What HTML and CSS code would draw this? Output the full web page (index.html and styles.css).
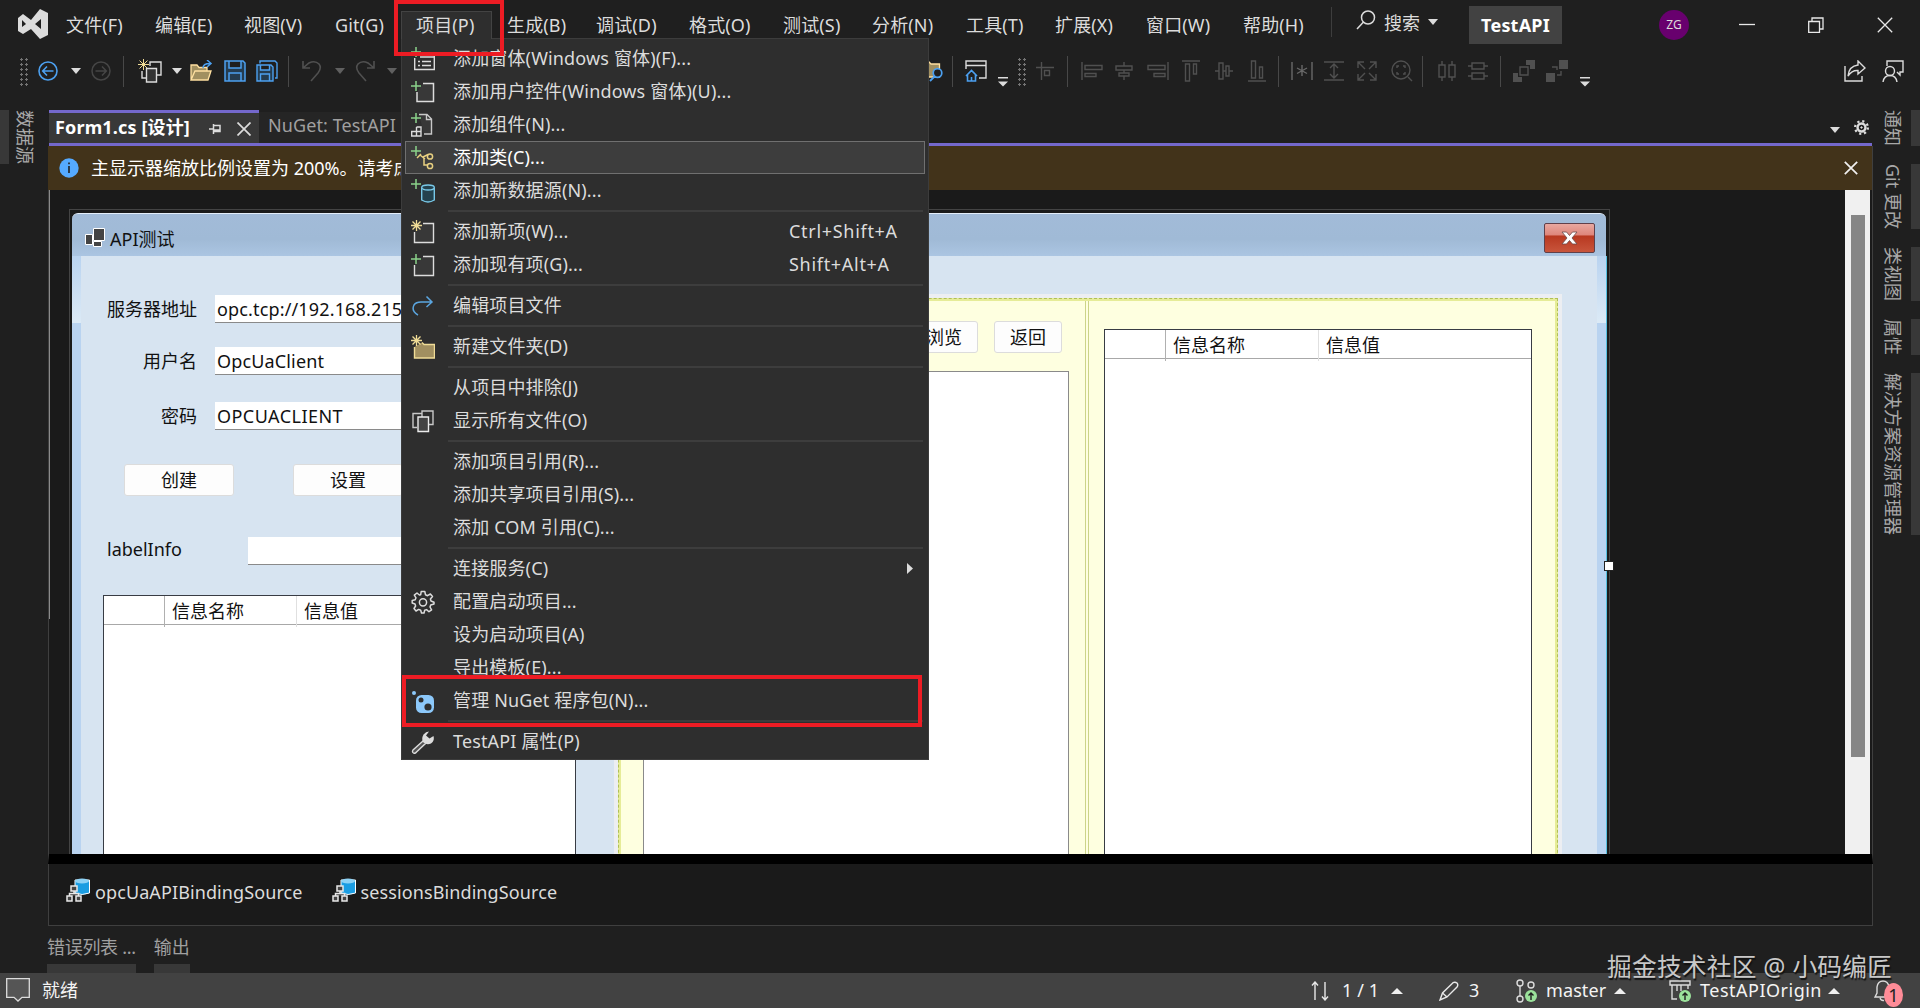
FILE: index.html
```html
<!DOCTYPE html>
<html lang="zh-CN">
<head>
    <meta charset="UTF-8">
    <title>TestAPI</title>
    <link rel="stylesheet" href="styles.css">
</head>
<body>

<!-- Title bar -->
<header class="titlebar">
    <svg class="logo" width="30" height="30" viewBox="0 0 30 30"><path fill="#dcdcdc" fill-rule="evenodd" d="M0 9L5 5L13 11L22 0L30 4V26L22 30L13 20L5 25L0 22ZM4 11V18L8 15ZM17 15L23 20V10Z"/></svg>
    <nav class="menubar">
        <span>文件(F)</span>
        <span>编辑(E)</span>
        <span>视图(V)</span>
        <span>Git(G)</span>
        <span class="open">项目(P)</span>
        <span>生成(B)</span>
        <span>调试(D)</span>
        <span>格式(O)</span>
        <span>测试(S)</span>
        <span>分析(N)</span>
        <span>工具(T)</span>
        <span>扩展(X)</span>
        <span>窗口(W)</span>
        <span>帮助(H)</span>
    </nav>
    <div class="search">
        <svg width="20" height="20" viewBox="0 0 20 20" fill="none" stroke="#dcdcdc" stroke-width="1.5"><circle cx="12" cy="7.500" r="6.500"/><path d="M7.500 12L1 19"/></svg>
        <span>搜索</span>
        <i class="caret"></i>
    </div>
    <div class="solution">TestAPI</div>
    <div class="avatar">ZG</div>
    <div class="window-buttons">
        <svg width="16" height="16" viewBox="0 0 16 16" stroke="#e8e8e8" stroke-width="1.300"><path d="M0 7.500H16"/></svg>
        <svg width="16" height="16" viewBox="0 0 16 16" fill="none" stroke="#e8e8e8" stroke-width="1.300"><path d="M.7 4.500H11.500V15.300H.7ZM4 4V1H15V12H12"/></svg>
        <svg width="16" height="16" viewBox="0 0 16 16" stroke="#e8e8e8" stroke-width="1.300"><path d="M.8.800L15.200 15.200M15.200.8L.8 15.200"/></svg>
    </div>
</header>

<!-- Toolbars -->
<div class="toolbar">
    <div class="standard-tools">
        <i class="grip"></i>
        <svg width="20" height="20" viewBox="0 0 20 20" fill="none" stroke="#4ca0f0" stroke-width="1.600"><circle cx="10" cy="10" r="9"/><path d="M15.500 10H5M9 5.500L4.700 10L9 14.500"/></svg>
        <i class="caret"></i>
        <svg width="20" height="20" viewBox="0 0 20 20" fill="none" stroke="#464646" stroke-width="1.500"><circle cx="10" cy="10" r="9"/><path d="M4.500 10H15M11 5.500L15.300 10L11 14.500"/></svg>
        <i class="bar"></i>
        <svg width="24" height="24" viewBox="0 0 24 24" fill="none"><path stroke="#f0dc96" d="M5.500 0V11M0 5.500H11M1.500 1.500L9.500 9.500M9.500 1.500L1.500 9.500"/><path stroke="#dcdcdc" stroke-width="1.400" d="M4 12V19H8M12 7V3H23V16H18"/><path stroke="#dcdcdc" fill="#333" stroke-width="1.400" d="M8.500 9.500H18.500V23H8.500Z"/></svg>
        <i class="caret"></i>
        <svg width="23" height="22" viewBox="0 0 23 22" fill="none"><path fill="#a18f60" stroke="#ffe0a0" stroke-width="1.300" d="M1 20V5H7L9 7.500H17V11M1 20L5 11H21L18 20Z"/><path stroke="#4ca0f0" stroke-width="1.500" d="M13 8Q13 3.500 20 3.500M17 0L21 3.500L17 7"/></svg>
        <svg width="22" height="22" viewBox="0 0 22 22" fill="#243c50" stroke="#4ca0f0" stroke-width="1.500"><path d="M1 1H19L21 3V21H1ZM5 1V8H17V1M5 21V13H17V21"/></svg>
        <svg width="22" height="22" viewBox="0 0 22 22" fill="#243c50" stroke="#4ca0f0" stroke-width="1.400"><path fill="none" d="M4 3.500V1H19L21 3V18H19"/><path d="M1 5H15L17 7V21H1ZM4.500 5V10H13.500V5M4.500 21V14H13.500V21"/></svg>
        <i class="bar"></i>
        <svg width="20" height="22" viewBox="0 0 20 22" fill="none" stroke="#505050" stroke-width="1.600"><path d="M1 1V8H8M1 8L7 3Q13 0 17 4Q20 8 16 13L9 21"/></svg>
        <i class="caret dim"></i>
        <svg width="20" height="22" viewBox="0 0 20 22" fill="none" stroke="#505050" stroke-width="1.600"><path d="M19 1V8H12M19 8L13 3Q7 0 3 4Q0 8 4 13L11 21"/></svg>
        <i class="caret dim"></i>
    </div>
    <div class="design-tools">
        <svg width="18" height="24" viewBox="0 0 18 24" fill="none"><path fill="#a18f60" stroke="#ffe0a0" stroke-width="1.300" d="M-4 3H2L4 5H12.500V18H-4Z"/><circle cx="10.500" cy="14" r="4.300" fill="#1f1f1f" stroke="#4ca0f0" stroke-width="1.700"/><path stroke="#4ca0f0" stroke-width="1.800" d="M7.500 17.500L3 22"/></svg>
        <i class="bar"></i>
        <svg width="22" height="22" viewBox="0 0 22 22" fill="none"><path stroke="#dcdcdc" stroke-width="1.400" d="M1 9V1H21V18H14M1 5.500H21"/><path stroke="#4ca0f0" stroke-width="1.600" d="M1 16L6.500 10.500L12 16M2.500 15V21H10.500V15M6.500 21V17"/></svg>
        <svg class="overflow" width="10" height="10" viewBox="0 0 10 10"><path fill="#dcdcdc" d="M0 0H10V1.500H0ZM0 4.500H10L5 9.500Z"/></svg>
        <i class="grip"></i>
        <svg class="dim-icon" width="18" height="18" viewBox="0 0 18 18"><path d="M5.500 0V18M0 5.500H18M8.500 8.500H13.500V13.500H8.500Z"/></svg>
        <i class="bar"></i>
        <svg class="dim-icon" width="22" height="18" viewBox="0 0 22 18"><path d="M1 0V18M4 3.500H21V7.500H4ZM4 11.500H15V14.500H4Z"/></svg>
        <svg class="dim-icon" width="18" height="18" viewBox="0 0 18 18"><path d="M9 0V4M9 8V11M9 14V18M1 4H17V8H1ZM4 11H14V14H4Z"/></svg>
        <svg class="dim-icon" width="22" height="18" viewBox="0 0 22 18"><path d="M21 0V18M1 3.500H18V7.500H1ZM7 11.500H18V14.500H7Z"/></svg>
        <svg class="dim-icon" width="18" height="22" viewBox="0 0 18 22"><path d="M0 1H18M3.500 4H7.500V21H3.500ZM11.500 4H14.500V14H11.500Z"/></svg>
        <svg class="dim-icon" width="18" height="18" viewBox="0 0 18 18"><path d="M0 9H4M8 9H11M14 9H18M4 1H8V17H4ZM11 4H14V14H11Z"/></svg>
        <svg class="dim-icon" width="18" height="22" viewBox="0 0 18 22"><path d="M0 21H18M3.500 1H7.500V18H3.500ZM11.500 7H14.500V18H11.500Z"/></svg>
        <i class="bar"></i>
        <svg class="dim-icon bright" width="22" height="20" viewBox="0 0 22 20"><path d="M1 1V19M21 1V19M11 4V15M6 7L16 12.500M16 7L6 12.500"/></svg>
        <svg class="dim-icon" width="20" height="20" viewBox="0 0 20 20"><path d="M0 1H20M0 19H20M10 3V17M6 7L10 3L14 7M6 13L10 17L14 13"/></svg>
        <svg class="dim-icon" width="20" height="20" viewBox="0 0 20 20"><path d="M1 7V1H7M1 1L8 8M13 1H19V7M19 1L12 8M1 13V19H7M1 19L8 12M19 13V19H13M19 19L12 12"/></svg>
        <svg class="dim-icon" width="22" height="22" viewBox="0 0 22 22"><circle cx="10" cy="10" r="9"/><path d="M17 17L21 21M6 8V6H8M12 6H14V8M6 12V14H8M14 12V14H12"/></svg>
        <i class="bar"></i>
        <svg class="dim-icon" width="18" height="20" viewBox="0 0 18 20"><path d="M1 4H7V16H1ZM11 4H17V16H11ZM4 0V4M4 16V20M14 0V4M14 16V20"/></svg>
        <svg class="dim-icon" width="20" height="20" viewBox="0 0 20 20"><path d="M4 2H16V8H4ZM4 12H16V18H4ZM0 5H4M16 5H20M0 15H4M16 15H20"/></svg>
        <i class="bar"></i>
        <svg class="dim-icon" width="22" height="22" viewBox="0 0 22 22"><path d="M7 7H15V15H7Z"/><path class="solid" d="M13 0H22V9H17V5H13ZM0 13H5V17H9V22H0Z"/></svg>
        <svg class="dim-icon" width="22" height="22" viewBox="0 0 22 22"><path d="M6 7H11V10M11 15H15V11"/><path class="solid" d="M13 0H22V9H13ZM0 13H9V22H0Z"/></svg>
        <svg class="overflow" width="10" height="10" viewBox="0 0 10 10"><path fill="#dcdcdc" d="M0 0H10V1.500H0ZM0 4.500H10L5 9.500Z"/></svg>
    </div>
    <div class="feedback-tools">
        <svg width="22" height="22" viewBox="0 0 22 22" fill="none" stroke="#dcdcdc" stroke-width="1.400"><path d="M1 6V21H18V16M14 1L21 8L14 14V10.500Q8 10 4 16Q5 6 14 5Z"/></svg>
        <svg width="22" height="22" viewBox="0 0 22 22" fill="none" stroke="#dcdcdc" stroke-width="1.400"><path d="M5 6V1H21V12H18V15L15 12"/><circle cx="8" cy="11" r="4.500"/><path d="M1 22Q2 15.500 8 15.500Q14 15.500 15 22"/></svg>
    </div>
</div>

<main class="workspace">
    <aside class="rail rail-left">
        <span>数据源</span>
    </aside>

    <section class="document">
        <div class="tabs">
            <div class="tab active">
                <b>Form1.cs [设计]</b>
                <svg width="12" height="12" viewBox="0 0 12 12" fill="none" stroke="#dcdcdc" stroke-width="1.500"><path d="M0 6H4M4.500 1V11M5 2.500H11V8.500H5M5 7H11"/></svg>
                <svg width="14" height="14" viewBox="0 0 14 14" stroke="#dcdcdc" stroke-width="1.700"><path d="M.5.500L13.500 13.500M13.500.5L.5 13.500"/></svg>
            </div>
            <div class="tab">NuGet: TestAPI</div>
            <div class="tab-tools">
                <i class="caret"></i>
                <svg width="15" height="15" viewBox="0 0 16 16" fill="none" stroke="#dcdcdc"><circle cx="8" cy="8" r="4.200" stroke-width="2.600"/><circle cx="8" cy="8" r="6.800" stroke-width="2.400" stroke-dasharray="2.300 3.040"/><circle cx="8" cy="8" r=".8" fill="#dcdcdc"/></svg>
            </div>
        </div>
        <div class="infobar">
            <svg width="20" height="20" viewBox="0 0 20 20"><circle cx="10" cy="10" r="9.700" fill="#55aaff"/><path fill="#1f1f1f" d="M9.200 4.500H10.800V6.300H9.200ZM9.200 8H10.800V15H9.200Z"/></svg>
            <span>主显示器缩放比例设置为 200%。请考虑</span>
            <svg width="14" height="14" viewBox="0 0 14 14" stroke="#f0f0f0" stroke-width="1.700"><path d="M.8.800L13.200 13.200M13.200.8L.8 13.200"/></svg>
        </div>

        <!-- Designer surface -->
        <div class="designer">
            <div class="form-window">
                <div class="form-title">
                    <svg width="20" height="20" viewBox="0 0 20 20"><path fill="#444" stroke="#fff" d="M8.500.5H19.500V12.500H8.500ZM.5 6.500H7.500V16.500H.5ZM8.500 13.500H16.500V18.500H8.500Z"/></svg>
                    <span>API测试</span>
                    <div class="form-close">
                        <svg width="17" height="14" viewBox="0 0 17 14"><path fill="#fff" stroke="#6a4a4a" stroke-width=".8" d="M1 1H5.500L8.500 4.500L11.500 1H16L11 7L16 13H11.500L8.500 9.500L5.500 13H1L6 7Z"/></svg>
                    </div>
                </div>
                <div class="form-client">
                    <div class="settings">
                        <div class="field"><label>服务器地址</label><div class="textbox">opc.tcp://192.168.215</div></div>
                        <div class="field"><label>用户名</label><div class="textbox">OpcUaClient</div></div>
                        <div class="field password"><label>密码</label><div class="textbox">OPCUACLIENT</div></div>
                        <div class="actions">
                            <div class="button">创建</div>
                            <div class="button">设置</div>
                        </div>
                        <div class="field info"><span>labelInfo</span><div class="textbox"></div></div>
                        <div class="datagrid">
                            <div class="datagrid-head"><span></span><span>信息名称</span><span>信息值</span></div>
                        </div>
                    </div>
                    <div class="split-panel">
                        <div class="browse-pane">
                            <div class="browse-buttons">
                                <div class="button">浏览</div>
                                <div class="button">返回</div>
                            </div>
                            <div class="tree"></div>
                        </div>
                        <div class="value-pane">
                            <div class="datagrid">
                                <div class="datagrid-head"><span></span><span>信息名称</span><span>信息值</span></div>
                            </div>
                        </div>
                    </div>
                </div>
                <i class="handle"></i>
            </div>
            <div class="scrollbar"><i></i></div>
        </div>
        <div class="tray">
            <div class="component">
                <svg width="24" height="24" viewBox="0 0 24 24"><path fill="#1b9de2" stroke="#fff" d="M9 2V15Q16 18 23.500 15V2Z"/><ellipse cx="16" cy="3" rx="7" ry="2.500" fill="#8ed2f5"/><path fill="#444" stroke="#e8e8e8" stroke-width="1.500" d="M5 8H11V13H5ZM1 18H6V23H1ZM10 18H15V23H10ZM3.500 18V15.500H12.500V18M8 13V16"/></svg>
                <span>opcUaAPIBindingSource</span>
            </div>
            <div class="component">
                <svg width="24" height="24" viewBox="0 0 24 24"><path fill="#1b9de2" stroke="#fff" d="M9 2V15Q16 18 23.500 15V2Z"/><ellipse cx="16" cy="3" rx="7" ry="2.500" fill="#8ed2f5"/><path fill="#444" stroke="#e8e8e8" stroke-width="1.500" d="M5 8H11V13H5ZM1 18H6V23H1ZM10 18H15V23H10ZM3.500 18V15.500H12.500V18M8 13V16"/></svg>
                <span>sessionsBindingSource</span>
            </div>
        </div>
        <div class="output-tabs">
            <span>错误列表 ...</span>
            <span>输出</span>
        </div>
    </section>

    <aside class="rail rail-right">
        <span>通知</span>
        <span>Git 更改</span>
        <span>类视图</span>
        <span>属性</span>
        <span>解决方案资源管理器</span>
    </aside>
</main>

<!-- Status bar -->
<footer class="statusbar">
    <svg width="24" height="24" viewBox="0 0 24 24" fill="#555" stroke="#dcdcdc" stroke-width="1.300"><path d="M.7.700H23.300V19.300H16L12 23L8 19.300H.7Z"/></svg>
    <span class="ready">就绪</span>
    <div class="git-status">
        <svg width="18" height="20" viewBox="0 0 18 20" fill="none" stroke="#e8e8e8" stroke-width="1.400"><path d="M4 19V1M1 4.500L4 1L7 4.500M14 1V19M11 15.500L14 19L17 15.500"/></svg>
        <span>1 / 1</span>
        <i class="caret up"></i>
        <svg width="20" height="20" viewBox="0 0 20 20" fill="none" stroke="#e8e8e8" stroke-width="1.400"><path d="M1 19L3.500 12L14 1.700Q16 .5 18 2Q19.500 4 18 6L8 16ZM3.500 12L8 16"/></svg>
        <span>3</span>
        <svg width="22" height="24" viewBox="0 0 22 24" fill="none" stroke="#dcdcdc" stroke-width="1.400"><circle cx="4" cy="4" r="3"/><circle cx="4" cy="20" r="3"/><circle cx="15" cy="6" r="3"/><path d="M4 7V17"/><circle cx="15" cy="17" r="6" fill="#9be29b" stroke="none"/><path stroke="#1f1f1f" d="M15 21V14M12.500 16.500L15 14L17.500 16.500"/></svg>
        <span>master</span>
        <i class="caret up"></i>
        <svg width="22" height="24" viewBox="0 0 22 24" fill="none" stroke="#dcdcdc" stroke-width="1.400"><path d="M1 2H21V6H1ZM3 6V20H8M8 6V12M12 6V12M19 6V10"/><circle cx="16" cy="17" r="6" fill="#9be29b" stroke="none"/><path stroke="#1f1f1f" d="M16 21V14M13.500 16.500L16 14L18.500 16.500"/></svg>
        <span class="repo">TestAPIOrigin</span>
        <i class="caret up"></i>
        <div class="bell">
            <svg width="18" height="22" viewBox="0 0 18 22" fill="none" stroke="#dcdcdc" stroke-width="1.400"><path d="M1 17L3 13V7Q4 1 9 1Q14 1 15 7V13L17 17ZM6 18Q7 21 10 20.500"/></svg>
            <b>1</b>
        </div>
    </div>
</footer>

<!-- Project menu -->
<div class="popup">
    <div class="item">
        <svg width="24" height="24" viewBox="0 0 24 24" fill="none"><path stroke="#dcdcdc" stroke-width="1.400" d="M9 6H23.300V22.500H3.700V11M7 14.500H9M11 14.500H20M7 18.500H9M11 18.500H20M9 10H23"/><path class="plus" d="M5 0V10M0 5H10"/></svg>
        <span>添加窗体(Windows 窗体)(F)...</span>
    </div>
    <div class="item">
        <svg width="24" height="24" viewBox="0 0 24 24" fill="none"><path fill="#383838" stroke="#dcdcdc" stroke-width="1.500" d="M12 3.500H22.500V21.500H6V12"/><path class="plus" d="M5 1V11M0 6H10"/></svg>
        <span>添加用户控件(Windows 窗体)(U)...</span>
    </div>
    <div class="item">
        <svg width="24" height="24" viewBox="0 0 24 24" fill="none"><path fill="#383838" stroke="#c8c8c8" stroke-width="1.400" d="M8 1.500H16L20.500 6V21H13M15.500 2V6.500H20"/><path stroke="#dcdcdc" stroke-width="1.400" d="M5.500 14H10V23H.7V18.500H10M5.500 14V23"/><path class="plus" d="M5 0V10M0 5H10"/></svg>
        <span>添加组件(N)...</span>
    </div>
    <div class="item selected">
        <svg width="24" height="24" viewBox="0 0 24 24" fill="none"><g stroke="#e8d080" stroke-width="1.500"><path d="M6 12L10 8M9 9L14 13M12 11L17 8.500M13 12V19H17"/><circle cx="19" cy="10.500" r="2.600"/><circle cx="19" cy="20" r="2.600"/></g><path class="plus" d="M5 0V10M0 5H10"/></svg>
        <span>添加类(C)...</span>
    </div>
    <div class="item">
        <svg width="24" height="24" viewBox="0 0 24 24" fill="none"><path fill="#24424e" stroke="#78c8e8" stroke-width="1.400" d="M10.700 8.500V21Q17 25 23.300 21V8.500"/><ellipse cx="17" cy="8.500" rx="6.300" ry="2.500" fill="#24424e" stroke="#78c8e8" stroke-width="1.400"/><path class="plus" d="M5 0V10M0 5H10"/></svg>
        <span>添加新数据源(N)...</span>
    </div>
    <hr>
    <div class="item">
        <svg width="24" height="24" viewBox="0 0 24 24" fill="none"><path fill="#383838" stroke="#dcdcdc" stroke-width="1.400" d="M12 3.500H22.500V22.500H3.500V12"/><path class="spark" d="M5.500 0V11M0 5.500H11M1.500 1.500L9.500 9.500M9.500 1.500L1.500 9.500"/></svg>
        <span>添加新项(W)...</span>
        <kbd>Ctrl+Shift+A</kbd>
    </div>
    <div class="item">
        <svg width="24" height="24" viewBox="0 0 24 24" fill="none"><path fill="#383838" stroke="#dcdcdc" stroke-width="1.400" d="M12 3.500H22.500V22.500H3.500V12"/><path class="plus" d="M5 1V11M0 6H10"/></svg>
        <span>添加现有项(G)...</span>
        <kbd>Shift+Alt+A</kbd>
    </div>
    <hr>
    <div class="item">
        <svg width="24" height="24" viewBox="0 0 24 24" fill="none" stroke="#5ba6e0" stroke-width="1.500"><path d="M7 21Q0 17 3 11Q5 8 10 8H20M15.500 2.500L21 8L15.500 13"/></svg>
        <span>编辑项目文件</span>
    </div>
    <hr>
    <div class="item">
        <svg width="24" height="24" viewBox="0 0 24 24" fill="none"><path fill="#a18f60" stroke="#f0dc96" stroke-width="1.400" d="M3.500 12V23H23.500V9.500H13L11 7.500"/><path class="spark" d="M5.500 0V11M0 5.500H11M1.500 1.500L9.500 9.500M9.500 1.500L1.500 9.500"/></svg>
        <span>新建文件夹(D)</span>
    </div>
    <hr>
    <div class="item"><span>从项目中排除(J)</span></div>
    <div class="item">
        <svg width="24" height="24" viewBox="0 0 24 24" fill="none" stroke="#c8c8c8" stroke-width="1.400"><path d="M6 18.500H2V4.500H11M11 8V2H22V15.500H17"/><path stroke="#ececec" fill="#444" d="M7 8H17.500V22.500H7Z"/></svg>
        <span>显示所有文件(O)</span>
    </div>
    <hr>
    <div class="item"><span>添加项目引用(R)...</span></div>
    <div class="item"><span>添加共享项目引用(S)...</span></div>
    <div class="item"><span>添加 COM 引用(C)...</span></div>
    <hr>
    <div class="item"><span>连接服务(C)</span><i class="submenu"></i></div>
    <div class="item">
        <svg width="24" height="24" viewBox="0 0 24 24" fill="none" stroke="#dcdcdc" stroke-width="1.500" stroke-linejoin="round"><path d="M10.200 1.500H13.800L14.500 4.800L16.500 5.700L19.400 4L21.500 6.500L19.400 9L20 11L23 12.200V14L19.700 15L19 17L20.600 19.800L18 21.700L15.500 19.600L13.700 20.200L13 23H10.500L9.700 20.200L7.700 19.400L5 21L3 18.500L4.600 16L4 14L1.200 13V10.500L4.200 9.700L5 7.800L3.300 5.200L6 3L8.400 5L9.700 4.700Z"/><circle cx="12" cy="12.300" r="3.600"/></svg>
        <span>配置启动项目...</span>
    </div>
    <div class="item"><span>设为启动项目(A)</span></div>
    <div class="item"><span>导出模板(E)...</span></div>
    <div class="item">
        <svg width="24" height="24" viewBox="0 0 24 24"><circle cx="3" cy="4" r="2" fill="#8cc8fa"/><rect x="5" y="6" width="18" height="18" rx="5.500" fill="#8cc8fa"/><circle cx="10" cy="11" r="2.500" fill="#2e2e2e"/><circle cx="17" cy="18" r="3.600" fill="#2e2e2e"/></svg>
        <span>管理 NuGet 程序包(N)...</span>
    </div>
    <hr>
    <div class="item">
        <svg width="24" height="24" viewBox="0 0 24 24"><path fill="#555" stroke="#dcdcdc" stroke-width="1.400" d="M12 11L2 20Q.8 22 2.500 23Q4 24 5.500 22L15 13Z"/><path fill="#dcdcdc" d="M18 1.500L15 5.500L18.500 8.500L22.500 6Q24 11 20 13.500Q16 15.500 12.500 12.500Q10 9 12.500 4.500Q15 1.500 18 1.500Z"/></svg>
        <span>TestAPI 属性(P)</span>
    </div>
</div>

<div class="mark mark-menu"></div>
<div class="mark mark-nuget"></div>
<div class="watermark">掘金技术社区 @ 小码编匠</div>

</body>
</html>
```
FILE: styles.css
```css
* {
    box-sizing: border-box;
}
body {
    position: relative;
    margin: 0;
    width: 1920px;
    height: 1008px;
    overflow: hidden;
    background: #1f1f1f;
    color: #dcdcdc;
    font: 18px/24px "Noto Sans", "Noto Sans CJK SC", sans-serif;
    white-space: nowrap;
}
svg {
    display: block;
    flex: none;
}
i {
    display: block;
    flex: none;
}
.caret {
    width: 10px;
    height: 6px;
    background: #dcdcdc;
    clip-path: polygon(0 0, 100% 0, 50% 100%);
}
.caret.dim {
    background: #606060;
}
.caret.up {
    width: 12px;
    clip-path: polygon(50% 0, 100% 100%, 0 100%);
    background: #f0f0f0;
}

/* title bar */
.titlebar {
    display: flex;
    height: 50px;
    padding-left: 18px;
}
.logo {
    margin-top: 9px;
}
.menubar {
    display: grid;
    grid-template-columns: 89px 89px 91px 81px 91px 89px 93px 94px 89px 94px 89px 91px 97px 88px;
    margin-left: 18px;
    padding-top: 13px;
    letter-spacing: 0.15px;
}
.menubar .open {
    z-index: 2;
    width: 91px;
    height: 28px;
    margin: -2px 0 0 -15px;
    padding: 1px 0 0 14px;
    border: 1px solid #434343;
    border-bottom: 0;
    background: #2e2e2e;
}
.search {
    display: flex;
    align-items: center;
    width: 138px;
    height: 30px;
    margin-top: 7px;
    padding: 0 0 0 24px;
    border-left: 1px solid #3d3d3d;
}
.search svg {
    margin-top: -4px;
}
.search span {
    margin: 2px 8px 0;
}
.solution {
    width: 93px;
    height: 38px;
    margin-top: 6px;
    background: #424242;
    color: #fff;
    font-weight: bold;
    line-height: 38px;
    text-align: center;
    letter-spacing: 0.2px;
}
.avatar {
    width: 30px;
    height: 30px;
    margin: 10px 0 0 97px;
    border-radius: 50%;
    background: #68006e;
    font-size: 12px;
    line-height: 30px;
    text-align: center;
}
.window-buttons {
    display: flex;
    gap: 53px;
    margin: 17px 0 0 50px;
}

/* toolbars */
.toolbar {
    display: flex;
    height: 60px;
    padding: 0 16px 18px 19px;
}
.standard-tools,
.design-tools,
.feedback-tools {
    display: grid;
    align-items: center;
}
.standard-tools {
    grid-template-columns: 19px 33px 20px 32px 15px 34px 18px 34px 32px 32px 14px 33px 20px 32px 540px;
}
.design-tools {
    grid-template-columns: 25px 13px 33px 19px 19px 31px 14px 34px 32px 35px 33px 33px 30px 13px 33px 33px 34px 31px 16px 30px 32px 13px 33px 34px 264px;
}
.feedback-tools {
    grid-template-columns: 38px 22px;
}
.bar {
    width: 1px;
    height: 31px;
    background: #484848;
}
.grip {
    width: 9px;
    height: 29px;
    background: radial-gradient(circle, #747474 1px, transparent 1.2px) 0 0 / 5px 5px;
}
.overflow {
    margin-top: 21px;
}
.dim-icon {
    fill: none;
    stroke: #505050;
    stroke-width: 1.4;
}
.dim-icon.bright {
    stroke: #686868;
}
.dim-icon .solid {
    fill: #505050;
    stroke: none;
}

/* side rails */
.workspace {
    display: flex;
    height: 863px;
}
.rail {
    display: flex;
    flex-direction: column;
    gap: 18px;
    color: #a8a8a8;
}
.rail span {
    writing-mode: vertical-rl;
    text-orientation: sideways;
    line-height: 26px;
}
.rail-left {
    width: 48px;
}
.rail-left span {
    width: 38px;
    border-left: 9px solid #383838;
}
.rail-right {
    width: 47px;
    align-items: flex-end;
}
.rail-right span {
    width: 40px;
    padding-right: 5px;
    border-right: 9px solid #383838;
}

/* document */
.document {
    width: 1825px;
}
.tabs {
    display: flex;
    height: 36px;
    margin: 0 1px;
    border-bottom: 3px solid #7468cc;
}
.tab {
    width: 160px;
    margin-top: 2px;
    padding: 1px 0 0 9px;
    background: #252525;
    color: #a0a0a0;
    letter-spacing: 0.1px;
}
.tab.active {
    display: flex;
    align-items: center;
    width: 210px;
    margin-top: 0;
    padding: 0 0 2px 6px;
    border-top: 3px solid #7468cc;
    background: #383838;
    color: #fff;
}
.tab.active b {
    width: 154px;
    letter-spacing: 0.15px;
}
.tab.active svg {
    margin-top: 4px;
}
.tab.active svg + svg {
    margin-left: 16px;
}
.tab-tools {
    display: flex;
    align-items: center;
    gap: 14px;
    margin: 2px 3px 0 auto;
}
.tab-tools .caret {
    margin-top: 5px;
}
.infobar {
    display: flex;
    align-items: center;
    height: 44px;
    padding: 0 14px 0 11px;
    background: #42331a;
    border-right: 1px solid #3f3f3f;
    color: #fff;
}
.infobar span {
    margin: 0 auto 0 12px;
}

/* design surface */
.designer {
    display: flex;
    justify-content: space-between;
    height: 674px;
    padding: 19px 2px 0 20px;
    border: solid #3f3f3f;
    border-width: 0 1px;
    border-bottom: 10px solid #000;
    background: linear-gradient(#8a8a8a, #8a8a8a) 0 0 / 1px 429px no-repeat #1a1a1a;
    overflow: hidden;
}
.form-window {
    position: relative;
    width: 1541px;
    height: 660px;
    border: 1px solid #444;
    border-bottom: 0;
    padding: 3px 3px 0 2px;
}
.form-title {
    display: flex;
    height: 43px;
    padding: 10px 11px 0 13px;
    border-top: 1px solid #e4eefa;
    border-radius: 6px 6px 0 0;
    background: linear-gradient(#a2bbd8, #a0bad6 60%, #abc5e2);
    color: #111;
}
.form-title svg {
    margin-top: 4px;
}
.form-title span {
    margin: 3px auto 0 5px;
}
.form-close {
    display: flex;
    justify-content: center;
    width: 51px;
    height: 30px;
    margin-top: -1px;
    padding-top: 4px;
    border: 1px solid #60404a;
    border-radius: 2px;
    background: linear-gradient(#e8a8a0, #de857a 40%, #b83820 42%, #c8553c);
}
.form-title .form-close svg {
    margin-top: 3px;
}
.form-client {
    display: flex;
    height: 598px;
    border: solid transparent;
    border-width: 0 9px;
    background: linear-gradient(#d7e4f1, #d7e4f1) padding-box, linear-gradient(#b9d3f0, #dceaf6 67px, #b9d3f0 67px) border-box;
    outline: 1px solid #56c0e0;
    outline-offset: 0;
    clip-path: inset(0 -1px 0 0);
    color: #111;
}
.settings {
    width: 537px;
    padding-top: 39px;
}
.field {
    display: flex;
    height: 28px;
    margin-bottom: 24px;
}
.field label {
    width: 116px;
    margin: 2px 18px 0 0;
    text-align: right;
}
.textbox {
    width: 360px;
    height: 28px;
    padding-left: 2px;
    border-bottom: 1px solid #8a8a8a;
    background: #fff;
    line-height: 29px;
    letter-spacing: 0.15px;
}
.field.password {
    margin-top: 27px;
}
.field.password .textbox {
    letter-spacing: 0.45px;
}
.actions {
    display: flex;
    gap: 59px;
    margin: 34px 0 41px 43px;
}
.button {
    width: 110px;
    height: 32px;
    border: 1px solid #dcdcdc;
    border-radius: 3px;
    background: #fdfdfd;
    line-height: 31px;
    text-align: center;
}
.field.info {
    margin-bottom: 30px;
}
.field.info span {
    width: 141px;
    margin-left: 26px;
}
.field.info .textbox {
    width: 327px;
}
.datagrid {
    width: 473px;
    height: 600px;
    margin-left: 22px;
    border: 1px solid #383c44;
    background: #fff;
}
.datagrid-head {
    display: grid;
    grid-template-columns: 60px 132px 1fr;
    height: 29px;
    border-bottom: 1px solid #a8a8a8;
    line-height: 31px;
}
.datagrid-head span {
    padding-left: 7px;
    border-left: 1px solid #e0e0e0;
}
.datagrid-head span:first-child {
    border-left: 0;
}
.datagrid-head span:nth-child(2) {
    border-color: #b0b0b0;
}
.split-panel {
    display: flex;
    width: 940px;
    height: 600px;
    margin-top: 42px;
    border: 3px solid #e6ec98;
    outline: 1px dashed #b0bf58;
    outline-offset: -1px;
    background: #feffe0;
    box-shadow: 0 0 0 4px #eceef2;
}
.browse-pane {
    width: 468px;
    padding: 20px 16px 0 22px;
    border-right: 4px double #ccd488;
}
.browse-buttons {
    display: flex;
    justify-content: flex-end;
    gap: 16px;
    margin-right: 7px;
}
.browse-buttons .button {
    width: 68px;
}
.tree {
    height: 500px;
    margin-top: 18px;
    border: 1px solid #8a8a8a;
    background: #fff;
}
.value-pane {
    padding: 28px 0 0 15px;
}
.value-pane .datagrid {
    width: 428px;
    margin: 0;
}
.value-pane .datagrid-head {
    grid-template-columns: 60px 153px 1fr;
}
.handle {
    position: absolute;
    right: -5px;
    top: 351px;
    width: 10px;
    height: 10px;
    border: 1px solid #222;
    background: #fff;
}
.scrollbar {
    width: 25px;
    height: 664px;
    margin-top: -19px;
    padding: 25px 5px 0 6px;
    background: #f0f0f0;
}
.scrollbar i {
    height: 542px;
    background: #868686;
}
.tray {
    display: flex;
    gap: 29px;
    height: 62px;
    padding: 14px 0 0 17px;
    border: 1px solid #3f3f3f;
    border-top: 0;
    background: #1a1a1a;
}
.component {
    display: flex;
    gap: 5px;
    letter-spacing: 0.1px;
}
.component span {
    margin-top: 2px;
}
.output-tabs {
    display: flex;
    gap: 18px;
    margin-left: -1px;
    padding-top: 9px;
    color: #a0a0a0;
}
.output-tabs span {
    height: 38px;
    border-bottom: 9px solid #383838;
}
.output-tabs span:first-child {
    letter-spacing: -0.3px;
}

/* status bar */
.statusbar {
    display: flex;
    height: 35px;
    padding: 5px 16px 0 6px;
    background: #424242;
    color: #f4f4f4;
}
.ready {
    margin-left: 12px;
}
.git-status {
    display: grid;
    grid-template-columns: 31px 49px 48px 30px 47px 30px 68px 55px 31px 128px 46px 30px;
    align-items: center;
    height: 26px;
    margin-left: 1233px;
    letter-spacing: 0.1px;
}
.git-status span {
    margin-top: -2px;
}
.git-status .repo {
    letter-spacing: 0.5px;
}
.bell {
    position: relative;
}
.bell b {
    position: absolute;
    left: 10px;
    top: 3px;
    width: 19px;
    height: 24px;
    border-radius: 50%;
    background: #ff8c98;
    color: #222;
    font-weight: normal;
    line-height: 24px;
    text-align: center;
}

/* project menu */
.popup {
    position: absolute;
    z-index: 1;
    left: 401px;
    top: 38px;
    width: 528px;
    height: 722px;
    padding: 3px;
    border: 1px solid #3c3c3c;
    background: #2e2e2e;
}
.item {
    display: flex;
    align-items: center;
    height: 33px;
    padding-left: 5px;
    border: 1px solid transparent;
    letter-spacing: 0.15px;
}
.item.selected {
    border-color: #707070;
    background: #3d3d3d;
    color: #fff;
}
.item span {
    width: 336px;
    margin: -2px 0 0 18px;
}
.item span:first-child {
    margin-left: 42px;
}
.item kbd {
    margin-top: -2px;
    font: inherit;
    letter-spacing: 0.7px;
}
.item .plus {
    stroke: #8ad28a;
    stroke-width: 1.5;
}
.item .spark {
    stroke: #f0dc96;
    stroke-width: 1.3;
}
.submenu {
    width: 6px;
    height: 11px;
    margin-left: 118px;
    background: #dcdcdc;
    clip-path: polygon(0 0, 100% 50%, 0 100%);
}
.popup hr {
    height: 2px;
    margin: 3px 2px 3px 43px;
    border: 0;
    background: #3d3d3d;
}

/* callouts */
.mark {
    position: absolute;
    z-index: 3;
    border: 4px solid #ed1c24;
}
.mark-menu {
    left: 394px;
    top: 0;
    width: 110px;
    height: 56px;
}
.mark-nuget {
    left: 402px;
    top: 675px;
    width: 520px;
    height: 52px;
}
.watermark {
    position: absolute;
    left: 1607px;
    top: 949px;
    color: #c8c8c8;
    font-size: 24.7px;
    line-height: 36px;
    letter-spacing: 0.25px;
    text-shadow: 1px 2px 1px #111;
}
```
